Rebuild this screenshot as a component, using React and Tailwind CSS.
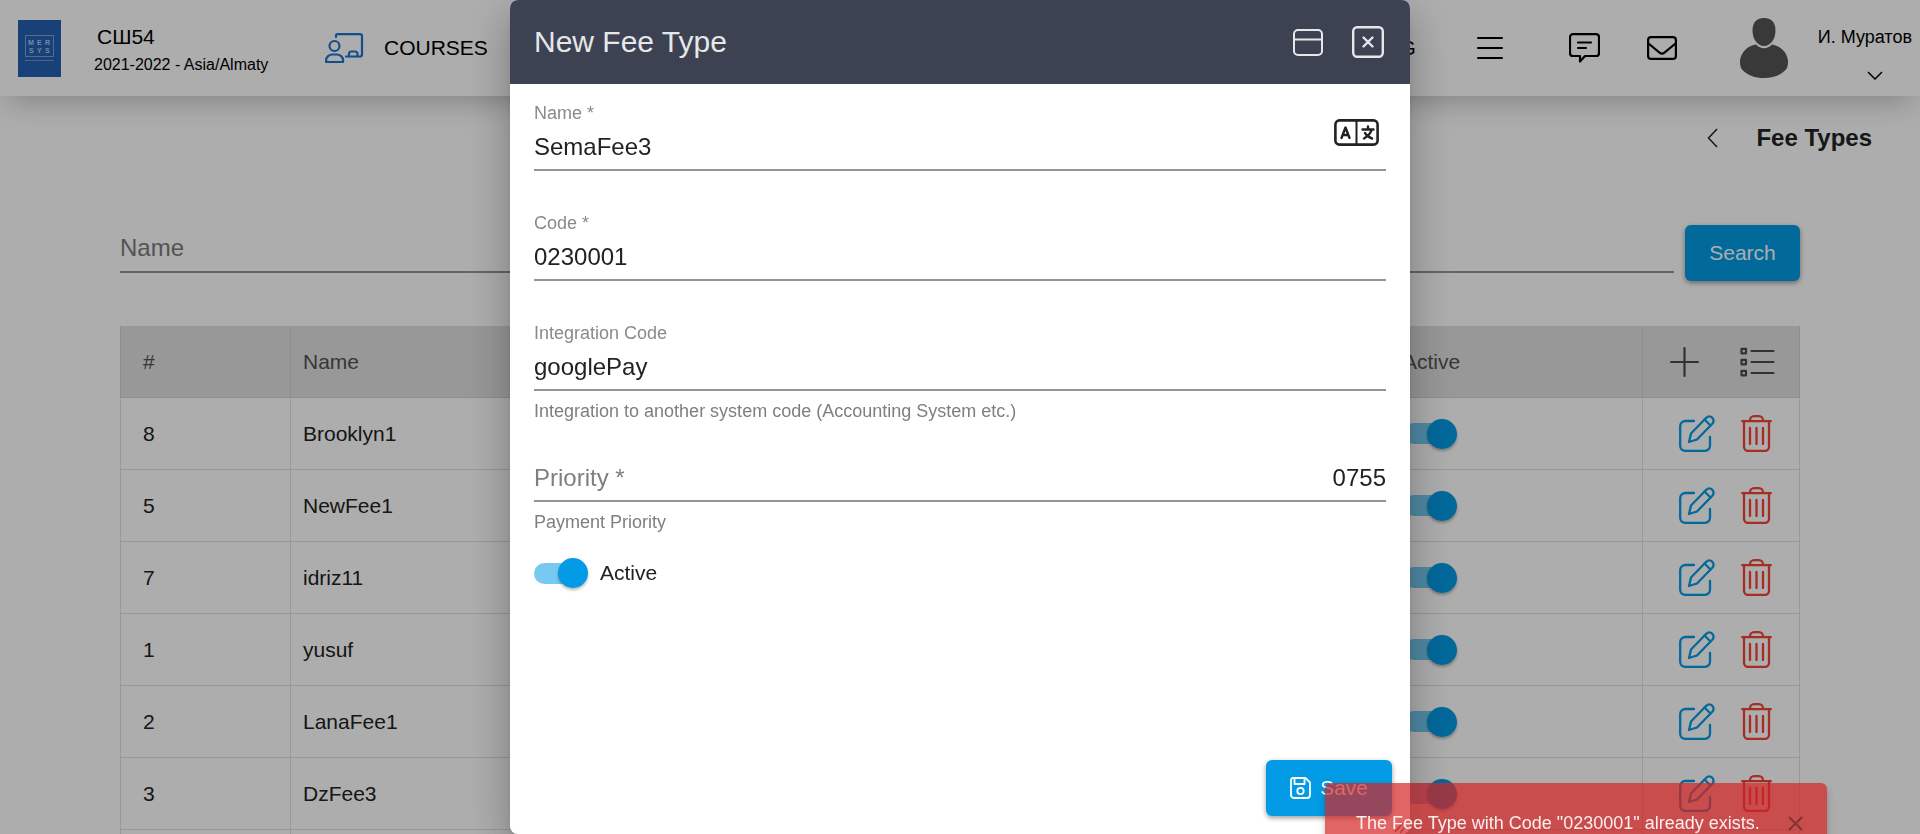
import React from "react";

const rows = [
  { id: "8", name: "Brooklyn1" },
  { id: "5", name: "NewFee1" },
  { id: "7", name: "idriz11" },
  { id: "1", name: "yusuf" },
  { id: "2", name: "LanaFee1" },
  { id: "3", name: "DzFee3" },
  { id: "", name: "" },
];

function Logo() {
  return (
    <svg width="43" height="57" viewBox="0 0 43 57" role="img" aria-label="Mersys">
      <rect width="43" height="57" fill="#2261b1" />
      <rect x="7.5" y="15.5" width="28" height="21" fill="none" stroke="#7da1cf" />
      <g fill="#b4cae8" fontFamily="Liberation Sans, sans-serif" fontSize="7" fontWeight="bold">
        <text x="10 19 27" y="25">MER</text>
        <text x="11 19 27" y="33">SYS</text>
      </g>
      <path d="M7 40.5h29" stroke="#7da1cf" strokeDasharray="3 .6" />
    </svg>
  );
}

function CoursesIcon() {
  return (
    <svg width="39" height="31" viewBox="0 0 39 31" fill="none" stroke="#1c74cf" strokeWidth="2.200" strokeLinejoin="round" strokeLinecap="round">
      <circle cx="9.5" cy="13" r="5" />
      <path d="M1.100 29v-1.500c0-3.500 3-6 6.500-6h4c3.500 0 6.500 2.500 6.500 6V29z" />
      <path d="M11 4V2.500C11 1.500 11.500 1.100 12.500 1.100H35c1.200 0 2 .8 2 2v18.400c0 1.200-.8 2-2 2H21" />
      <path d="M24 23.500v-2.500c0-1.700 1-2.500 2.500-2.500h3.500c1.500 0 2.500.8 2.500 2.500v2.500" />
    </svg>
  );
}

function EditIcon() {
  return (
    <svg width="36" height="37" viewBox="0 0 36 37" fill="none" stroke="#039be5" strokeWidth="2.300" strokeLinecap="round" strokeLinejoin="round">
      <path d="M15 6H6.200a5 5 0 0 0-5 5v19.800a5 5 0 0 0 5 5H26a5 5 0 0 0 5-5V22" />
      <path d="M27.300 2.700a4 4 0 0 1 6 6L18 24.500 10 27l2-8.500z" />
      <path d="M25.500 4.500l6 6" />
    </svg>
  );
}

function TrashIcon() {
  return (
    <svg width="31" height="37" viewBox="0 0 31 37" fill="none" stroke="#f44336" strokeWidth="2.300" strokeLinecap="round" strokeLinejoin="round">
      <path d="M1.200 6.200h28.600M9 6V5.200a4 4 0 0 1 4-4h5a4 4 0 0 1 4 4V6" />
      <path d="M3 7v24.800a4 4 0 0 0 4 4h17a4 4 0 0 0 4-4V7" />
      <path d="M9 13v16M15.500 13v16M22 13v16" />
    </svg>
  );
}

function Toggle({ id, label }) {
  return (
    <span className="relative inline-flex h-[30px] w-[54px] shrink-0 items-center">
      <input id={id} type="checkbox" defaultChecked aria-label={label} className="peer absolute inset-0 z-10 cursor-pointer opacity-0" />
      <span className="h-[21px] w-[48px] rounded-full bg-[#039be5]/54" />
      <span className="absolute right-0 size-[30px] rounded-full bg-[#039be5] shadow-[0_2px_3px_rgba(0,0,0,0.3)]" />
    </span>
  );
}

function Header() {
  return (
    <header className="relative flex h-24 items-center bg-white pl-[18px] pr-2 text-black shadow-[0_14px_28px_-8px_rgba(0,0,0,0.24)]">
      <Logo />
      <div className="ml-[33px] flex w-[231px] flex-col gap-0.5 pt-1">
        <div className="pl-[3px] text-[21px] leading-7">СШ54</div>
        <div className="text-base leading-6">2021-2022 - Asia/Almaty</div>
      </div>
      <a href="#courses" className="flex items-center gap-5 text-[21px] leading-7">
        <CoursesIcon />
        COURSES
      </a>
      <nav className="ml-auto flex items-center">
        <a href="#messaging" className="text-[21px] leading-7">MESSAGING</a>
        <button type="button" aria-label="Menu" className="ml-[61px]">
          <svg width="26" height="22" viewBox="0 0 26 22" stroke="currentColor" strokeWidth="2" strokeLinecap="round">
            <path d="M1 1h24M1 11h24M1 21h24" />
          </svg>
        </button>
        <button type="button" aria-label="Chat" className="ml-[66px]">
          <svg width="31" height="30" viewBox="0 0 31 30" fill="none" stroke="currentColor" strokeWidth="2.200" strokeLinecap="round" strokeLinejoin="round">
            <path d="M4 1.100h23a3 3 0 0 1 3 3V20a3 3 0 0 1-3 3H16l-5 5.500V23H4a3 3 0 0 1-3-3V4.100a3 3 0 0 1 3-3z" />
            <path d="M9 9.500h13M9 15h8" />
          </svg>
        </button>
        <button type="button" aria-label="Mail" className="ml-[47px]">
          <svg width="30" height="24" viewBox="0 0 30 24" fill="none" stroke="currentColor" strokeWidth="2.200" strokeLinejoin="round">
            <rect x="1.100" y="1.100" width="27.800" height="21.800" rx="3" />
            <path d="M1.500 7.500l11 9.200c1.500 1.200 3.500 1.200 5 0l11-9.200" />
          </svg>
        </button>
        <svg className="ml-[63px]" width="48" height="60" viewBox="0 0 48 60" fill="#545454" role="img" aria-label="Profile">
          <path d="M24 0c7 0 11.500 4 11.500 12.500C35.500 21 30.500 28 24 28S12.500 21 12.500 12.500C12.500 4 17 0 24 0z" />
          <path d="M16 26.500c5 5 11 5 16 0C41 28 48 35 48 44c0 4-1 6.500-2.500 8C40 57.500 33 60 24 60S8 57.500 2.500 52C1 50.500 0 48 0 44c0-9 7-16 16-17.500z" />
        </svg>
        <button type="button" className="ml-[30px] flex flex-col gap-[22px] pt-2 text-lg leading-6">
          И. Муратов
          <svg className="mr-[29px] self-end" width="16" height="9" viewBox="0 0 16 9" fill="none" stroke="currentColor" strokeWidth="1.500">
            <path d="M1 1l7 7 7-7" />
          </svg>
        </button>
      </nav>
    </header>
  );
}

function Page() {
  return (
    <main>
      <div className="flex h-[84px] items-center justify-end gap-[38px] pr-12">
        <button type="button" aria-label="Back">
          <svg width="11" height="20" viewBox="0 0 11 20" fill="none" stroke="#222" strokeWidth="1.500">
            <path d="M10 1L1.500 10 10 19" />
          </svg>
        </button>
        <h1 className="text-2xl leading-7 font-bold text-[#222]">Fee Types</h1>
      </div>
      <div className="px-[120px] pt-[45px]">
        <form className="flex items-start gap-[11px]">
          <input aria-label="Name" placeholder="Name" className="h-12 min-w-0 flex-1 border-b-2 border-[#949494] bg-transparent text-2xl outline-none placeholder:text-[#7b7b7b]" />
          <button type="button" className="h-14 w-[115px] rounded-md bg-[#039be5] text-[21px] text-white shadow-[0_2px_5px_rgba(0,0,0,0.4)]">Search</button>
        </form>
        <table className="mt-[45px] w-full table-fixed border-separate border-spacing-0 text-[21px] leading-7">
          <thead>
            <tr className="h-[72px] bg-[#e0e0e0] text-left text-[#525252]">
              <th className="w-[171px] border-r border-b border-l border-[#d0d0d0] pl-[22px] font-normal">#</th>
              <th className="border-r border-b border-[#d0d0d0] pl-3 font-normal">Name</th>
              <th className="w-[252px] border-r border-b border-[#d0d0d0] pl-3 font-normal">Active</th>
              <th className="w-[157px] border-r border-b border-[#d0d0d0] font-normal">
                <div className="flex items-center gap-[41px] pl-[27px]">
                  <button type="button" aria-label="Add">
                    <svg width="29" height="30" viewBox="0 0 29 30" stroke="#4a4a4a" strokeWidth="2.200" strokeLinecap="round">
                      <path d="M14.500 1.100v27.800M1.100 15h26.800" />
                    </svg>
                  </button>
                  <button type="button" aria-label="Columns">
                    <svg width="35" height="30" viewBox="0 0 35 30" fill="none" stroke="#4a4a4a" strokeWidth="2.200" strokeLinecap="round" strokeLinejoin="round">
                      <path d="M11.500 4h22M11.500 15h22M11.500 26h22" />
                      <path d="M1.500 1.800h4.500v4.500H1.500zM1.500 12.800h4.500v4.500H1.500zM1.500 23.800h4.500v4.500H1.500z" />
                    </svg>
                  </button>
                </div>
              </th>
            </tr>
          </thead>
          <tbody className="text-[#222]">
            {rows.map((row, i) => (
              <tr key={i} className="h-[72px]">
                <td className="border-r border-b border-l border-[#e0e0e0] pl-[22px]">{row.id}</td>
                <td className="border-r border-b border-[#e0e0e0] pl-3">{row.name}</td>
                <td className="border-r border-b border-[#e0e0e0] pl-3 align-middle">
                  {row.id && (
                    <div className="flex">
                      <Toggle label={`${row.name} active`} />
                    </div>
                  )}
                </td>
                <td className="border-r border-b border-[#e0e0e0]">
                  {row.id && (
                    <div className="flex items-center gap-[26px] pl-9">
                      <button type="button" aria-label={`Edit ${row.name}`}><EditIcon /></button>
                      <button type="button" aria-label={`Delete ${row.name}`}><TrashIcon /></button>
                    </div>
                  )}
                </td>
              </tr>
            ))}
          </tbody>
        </table>
      </div>
    </main>
  );
}

function Field({ id, label, value, hint, children }) {
  return (
    <div>
      <div className="flex items-center border-b-2 border-[#949494] pb-2">
        <div className="flex min-w-0 flex-1 flex-col gap-2">
          <label htmlFor={id} className="text-lg leading-6 text-[#8a8a8a]">{label}</label>
          <input id={id} defaultValue={value} className="h-7 w-full text-2xl leading-7 text-[#222] outline-none" />
        </div>
        {children}
      </div>
      {hint && <p className="mt-2 text-lg leading-[25px] text-[#7f7f7f]">{hint}</p>}
    </div>
  );
}

function FeeDialog() {
  return (
    <div role="dialog" aria-label="New Fee Type" className="relative flex h-full w-[900px] max-w-full flex-col overflow-hidden rounded-lg bg-white">
      <div className="flex h-[84px] shrink-0 items-center bg-[#3d4252] pr-[26px] pl-6 text-[#e6e7ea]">
        <h2 className="flex-1 text-[30px] leading-9">New Fee Type</h2>
        <button type="button" aria-label="Restore window" className="mr-[29px]">
          <svg width="30" height="27" viewBox="0 0 30 27" fill="none" stroke="currentColor" strokeWidth="2">
            <rect x="1" y="1" width="28" height="25" rx="4" />
            <path d="M1 10.500h28" />
          </svg>
        </button>
        <button type="button" aria-label="Close dialog">
          <svg width="32" height="32" viewBox="0 0 32 32" fill="none" stroke="currentColor" strokeWidth="2.400" strokeLinecap="round">
            <rect x="1.200" y="1.200" width="29.600" height="29.600" rx="4" />
            <path d="M11.500 11.500l9 9M20.500 11.500l-9 9" />
          </svg>
        </button>
      </div>
      <form className="flex flex-1 flex-col">
        <div className="flex flex-col gap-10 px-6 pt-[17px]">
          <Field id="fee-name" label="Name *" value="SemaFee3">
            <button type="button" aria-label="Translate" className="mr-[7px] pt-0.5">
              <svg width="45" height="27" viewBox="0 0 45 27" fill="none" stroke="#222" strokeWidth="2.600" strokeLinecap="round" strokeLinejoin="round">
                <rect x="1.400" y="1.400" width="42.200" height="24.200" rx="4" />
                <path d="M22.500 2v23" strokeWidth="2" />
                <path d="M7.500 19L11.500 8.500 15.500 19M9 16h5M28.500 10.500h11M34 7.500v3M37.500 11C36.500 14.500 33.500 17.500 30 19.500M31 14c1.500 2.700 4 4.500 7 5.500" strokeWidth="2.400" />
              </svg>
            </button>
          </Field>
          <Field id="fee-code" label="Code *" value="0230001" />
          <Field id="fee-integration" label="Integration Code" value="googlePay" hint="Integration to another system code (Accounting System etc.)" />
          <div>
            <div className="flex border-b-2 border-[#949494] pb-2 text-2xl leading-7">
              <label htmlFor="fee-priority" className="text-[#7f7f7f]">Priority *</label>
              <input id="fee-priority" defaultValue="0755" className="h-7 min-w-0 flex-1 text-right text-[#222] outline-none" />
            </div>
            <p className="mt-2 text-lg leading-[25px] text-[#7f7f7f]">Payment Priority</p>
            <div className="mt-[23px] flex items-center gap-3 text-[21px] leading-7 text-[#222]">
              <Toggle id="fee-active" />
              <label htmlFor="fee-active">Active</label>
            </div>
          </div>
        </div>
        <div className="mt-auto flex justify-end p-[18px]">
          <button type="button" className="flex h-14 items-center gap-[9px] rounded-md bg-[#039be5] px-6 text-[21px] leading-7 text-white shadow-[0_2px_5px_rgba(0,0,0,0.4)]">
            <svg width="21" height="22" viewBox="0 0 21 22" fill="none" stroke="currentColor" strokeWidth="1.800" strokeLinejoin="round">
              <path d="M3 1h12.500L20 5.500V18a3 3 0 0 1-3 3H4a3 3 0 0 1-3-3V3a2 2 0 0 1 2-2z" />
              <path d="M4.500 1v6h10V1" />
              <circle cx="10.500" cy="14" r="3.200" />
            </svg>
            Save
          </button>
        </div>
      </form>
      <svg className="absolute right-1 bottom-0" width="12" height="12" viewBox="0 0 12 12" stroke="#666" strokeWidth="1.300">
        <path d="M1 10L9 1M6 11l5-6" />
      </svg>
    </div>
  );
}

export default function App() {
  return (
    <div className="relative h-screen overflow-hidden bg-white font-['Liberation_Sans',Arial,sans-serif]">
      <Header />
      <Page />
      <div className="fixed inset-0 flex justify-center bg-black/32">
        <div className="h-full max-w-full rounded-lg shadow-[0_11px_15px_-7px_rgba(0,0,0,0.2),0_24px_38px_3px_rgba(0,0,0,0.14),0_9px_46px_8px_rgba(0,0,0,0.12)]">
          <FeeDialog />
        </div>
      </div>
      <div role="alert" className="fixed right-[93px] -bottom-[29px] flex h-20 w-[502px] items-center rounded-md bg-[#d42424]/70 pr-6 pl-[31px] text-lg leading-6 text-white/90 shadow-[0_3px_5px_-1px_rgba(0,0,0,0.2),0_6px_10px_rgba(0,0,0,0.14)]">
        <span className="flex-1 whitespace-nowrap">The Fee Type with Code "0230001" already exists.</span>
        <button type="button" aria-label="Dismiss" className="text-black/35">
          <svg width="15" height="15" viewBox="0 0 15 15" stroke="currentColor" strokeWidth="2">
            <path d="M1 1l13 13M14 1L1 14" />
          </svg>
        </button>
      </div>
    </div>
  );
}
